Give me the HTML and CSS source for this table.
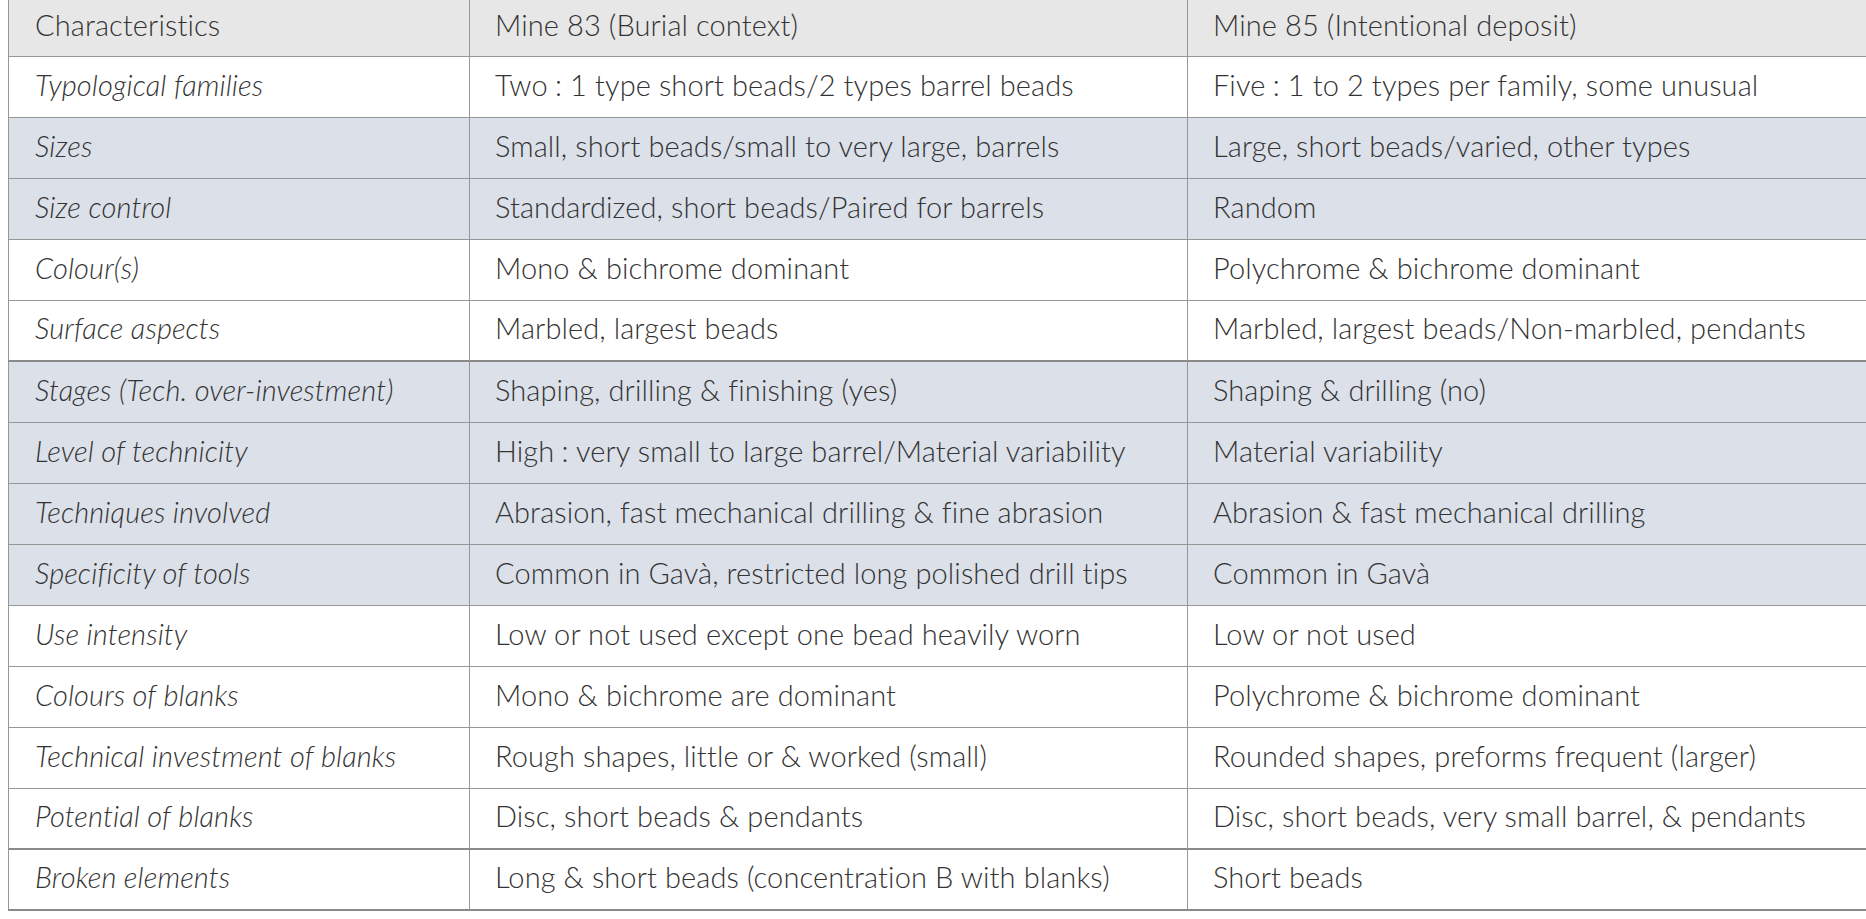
FILE: index.html
```html
<!DOCTYPE html>
<html lang="en">
<head>
<meta charset="utf-8">
<title>Characteristics of Mine 83 and Mine 85</title>
<link rel="stylesheet" href="styles.css">
</head>
<body>
<table class="compare">
  <colgroup>
    <col class="c1"><col class="c2"><col class="c3">
  </colgroup>
  <thead>
    <tr class="head">
      <th>Characteristics</th>
      <th>Mine 83 (Burial context)</th>
      <th>Mine 85 (Intentional deposit)</th>
    </tr>
  </thead>
  <tbody>
    <tr><td>Typological families</td><td>Two&#8239;: 1 type short beads/2 types barrel beads</td><td>Five&#8239;: 1 to 2 types per family, some unusual</td></tr>
    <tr class="blue"><td>Sizes</td><td>Small, short beads/small to very large, barrels</td><td>Large, short beads/varied, other types</td></tr>
    <tr class="blue"><td>Size control</td><td>Standardized, short beads/Paired for barrels</td><td>Random</td></tr>
    <tr><td>Colour(s)</td><td>Mono &amp; bichrome dominant</td><td>Polychrome &amp; bichrome dominant</td></tr>
    <tr class="thick"><td>Surface aspects</td><td>Marbled, largest beads</td><td>Marbled, largest beads/Non-marbled, pendants</td></tr>
    <tr class="blue"><td>Stages (Tech. over-investment)</td><td>Shaping, drilling &amp; finishing (yes)</td><td>Shaping &amp; drilling (no)</td></tr>
    <tr class="blue"><td>Level of technicity</td><td>High&#8239;: very small to large barrel/Material variability</td><td>Material variability</td></tr>
    <tr class="blue"><td>Techniques involved</td><td>Abrasion, fast mechanical drilling &amp; fine abrasion</td><td>Abrasion &amp; fast mechanical drilling</td></tr>
    <tr class="blue"><td>Specificity of tools</td><td>Common in Gavà, restricted long polished drill tips</td><td>Common in Gavà</td></tr>
    <tr><td>Use intensity</td><td>Low or not used except one bead heavily worn</td><td>Low or not used</td></tr>
    <tr><td>Colours of blanks</td><td>Mono &amp; bichrome are dominant</td><td>Polychrome &amp; bichrome dominant</td></tr>
    <tr><td>Technical investment of blanks</td><td>Rough shapes, little or &amp; worked (small)</td><td>Rounded shapes, preforms frequent (larger)</td></tr>
    <tr class="thick"><td>Potential of blanks</td><td>Disc, short beads &amp; pendants</td><td>Disc, short beads, very small barrel, &amp; pendants</td></tr>
    <tr class="thick"><td>Broken elements</td><td>Long &amp; short beads (concentration B with blanks)</td><td>Short beads</td></tr>
  </tbody>
</table>
</body>
</html>
```
FILE: styles.css
```css
html, body {
  margin: 0;
  padding: 0;
  background: #ffffff;
  overflow: hidden;
}

body {
  padding-left: 8px;
  font-family: "Lato", "Open Sans", "Liberation Sans", sans-serif;
  font-weight: 300;
  color: #333333;
}

.compare {
  width: 1858px;
  table-layout: fixed;
  border-collapse: separate;
  border-spacing: 0;
  font-size: 29px;
  letter-spacing: 0.1px;
}

.c1 { width: 461px; }
.c2 { width: 718px; }
.c3 { width: 679px; }

.compare th,
.compare td {
  box-sizing: border-box;
  height: 61px;
  padding: 0 0 5px 26px;
  text-align: left;
  vertical-align: middle;
  white-space: nowrap;
  overflow: hidden;
  font-weight: 300;
  line-height: 36px;
  border-bottom: 1px solid #979797;
  border-left: 1px solid #979797;
}

.compare th + th,
.compare td + td {
  padding-left: 25px;
}

.head th {
  height: 57px;
  background: #e7e7e7;
  padding-bottom: 7px;
}

.compare td:first-child {
  font-style: italic;
}

.blue td {
  background: #dbe0e9;
}

.thick td {
  border-bottom: 2px solid #8a8a8a;
}
```
